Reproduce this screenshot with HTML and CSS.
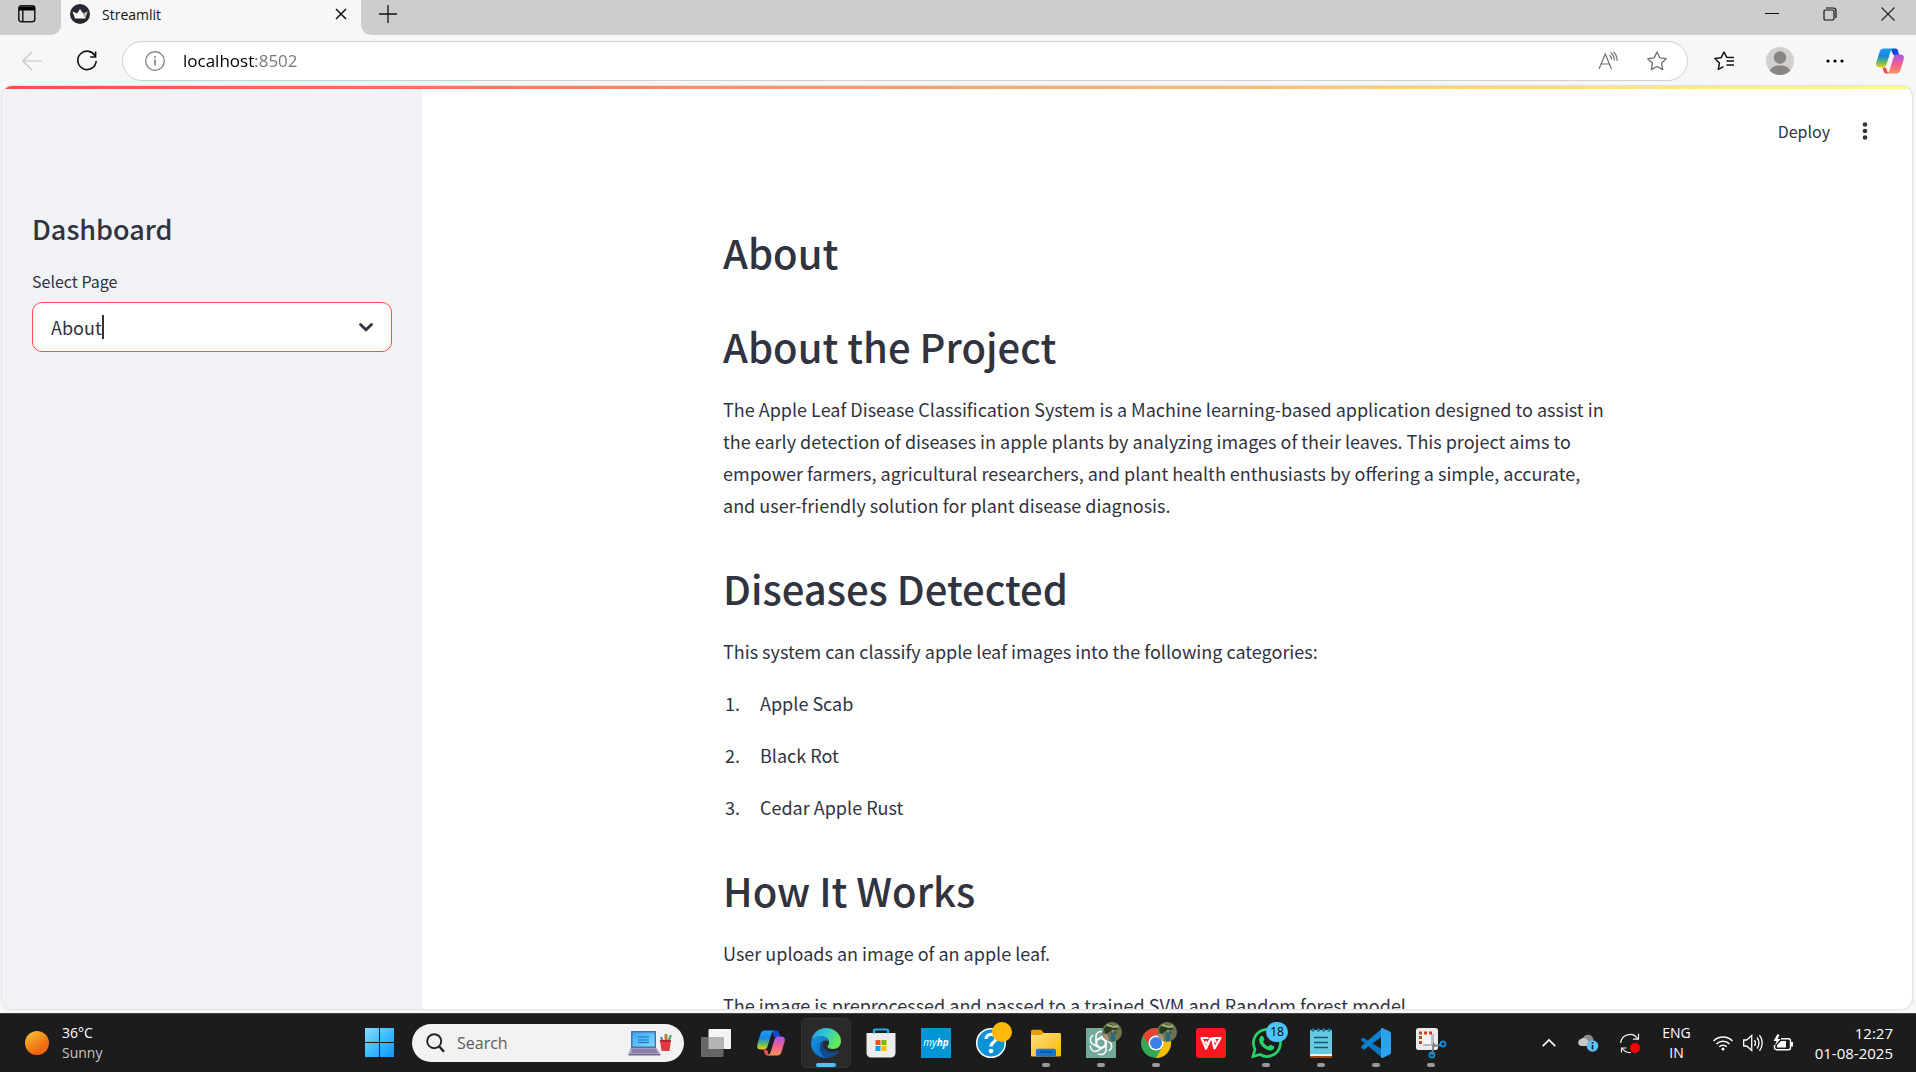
FILE: index.html
```html
<!DOCTYPE html>
<html lang="en">
<head>
<meta charset="utf-8">
<title>Streamlit</title>
<link rel="stylesheet" href="styles.css">
</head>
<body>
<svg class="sprite" aria-hidden="true">
  <defs>
    <linearGradient id="cpA" x1="0" y1="0" x2="0" y2="1"><stop offset="0" stop-color="#1b9df5"/><stop offset=".4" stop-color="#1a86e0"/><stop offset=".7" stop-color="#5dba6a"/><stop offset="1" stop-color="#f2cf13"/></linearGradient>
    <linearGradient id="cpB" x1="0" y1="0" x2="0" y2="1"><stop offset="0" stop-color="#a657f0"/><stop offset=".45" stop-color="#ea5c98"/><stop offset="1" stop-color="#ff9257"/></linearGradient>
    <symbol id="copilot" viewBox="0 0 28 28">
      <path d="M17 1.500h2.500c1.300 0 2 .8 2.400 2L23.500 9h-4c-2 0-3.500-3-4.500-7z" fill="#1746cf"/>
      <path d="M8 1.500h9.500c-2 .5-2.800 2-3.300 4L11 16c-.8 3-2 4.500-4.500 4.500H4c-3.500 0-4.500-2-3.500-5.500L3.500 5C4.300 2.500 5.800 1.500 8 1.500z" fill="url(#cpA)"/>
      <path d="M8 20.500c2 0 2.500 1 3 3 .5 1.800 1 3 3 3h-4c-1.500 0-2-1-2.500-2.500l-1-3.500z" fill="#ee4b54"/>
      <path d="M20 26.500h-9.500c2-.5 2.800-2 3.300-4L17 12c.8-3 2-4.500 4.500-4.500H24c3.500 0 4.500 2 3.500 5.500l-3 10c-.8 2.500-2.300 3.500-4.500 3.500z" fill="url(#cpB)"/>
    </symbol>
  </defs>
</svg>

<header class="tabstrip">
  <div class="strip-left">
    <button class="plain" aria-label="Tab actions">
      <svg width="20" height="20" viewBox="0 0 20 20" fill="none" stroke="#1a1a1a" stroke-width="1.500"><rect x="1.800" y="1.800" width="16" height="16" rx="2.500"/><path d="M5.800 5v13"/><path d="M2 2.500h16v4H2z" fill="#000" stroke="none"/></svg>
    </button>
  </div>
  <div class="tab">
    <svg width="20" height="20" viewBox="0 0 20 20"><circle cx="10" cy="10" r="10" fill="#262730"/><path d="M2.500 7.500L7 9.500 10 5l3.200 4.500 4.300-2-2.300 7H5z" fill="#fff"/><path d="M10 5l3.200 4.500 4.300-2-2.300 7z" fill="#b5b5b8"/></svg>
    <span class="tab-title">Streamlit</span>
    <button class="plain" aria-label="Close tab"><svg width="12" height="12" viewBox="0 0 12 12" stroke="#111" stroke-width="1.500"><path d="M1 1l10 10M11 1L1 11"/></svg></button>
  </div>
  <div class="strip-right">
    <button class="plain" aria-label="New tab"><svg width="18" height="18" viewBox="0 0 18 18" stroke="#111" stroke-width="1.300"><path d="M9 0v18M0 9h18"/></svg></button>
    <div class="window-buttons">
      <button class="plain" aria-label="Minimize"><svg width="14" height="14" viewBox="0 0 14 14" stroke="#111"><path d="M0 6.500h14"/></svg></button>
      <button class="plain" aria-label="Restore"><svg width="14" height="14" viewBox="0 0 14 14" fill="none" stroke="#111" stroke-width="1.200"><rect x="1" y="3" width="10" height="10" rx="1.200"/><path d="M3 1h7.500a2.500 2.500 0 0 1 2.500 2.500V11"/></svg></button>
      <button class="plain" aria-label="Close"><svg width="14" height="14" viewBox="0 0 14 14" stroke="#222" stroke-width="1.100"><path d="M.5.500l13 13M13.500.500l-13 13"/></svg></button>
    </div>
  </div>
</header>

<nav class="toolbar" aria-label="Browser">
  <button class="plain" aria-label="Back"><svg width="20" height="20" viewBox="0 0 20 20" fill="none" stroke="#c3c3c3" stroke-width="1.200"><path d="M20 10H.8M10 1L.8 10l9.200 9"/></svg></button>
  <button class="plain reload" aria-label="Refresh"><svg width="20" height="20" viewBox="0 0 20 20" fill="none" stroke="#111" stroke-width="1.600"><path d="M18.500 5.800A9.200 9.200 0 1 0 19.200 10"/><path d="M18.600.5v5.500h-5.500"/></svg></button>
  <div class="address">
    <svg width="20" height="20" viewBox="0 0 20 20" fill="none" stroke="#757575" stroke-width="1.200"><circle cx="10" cy="10" r="9.300"/><path d="M10 8.500v6M10 5v1.800" stroke-width="1.500"/></svg>
    <input class="url" type="text" value="localhost:8502" aria-label="Address">
    <button class="plain" aria-label="Read aloud"><svg width="20" height="20" viewBox="0 0 20 20" fill="none" stroke="#6f6f6f" stroke-width="1.200"><path d="M1 18L7.300 3l6.200 15M3.200 13h8.200M11.500 4c1.300 1 2 2.500 2 4.500M12.500 1.500c2.500 1.800 4 4.500 3.800 8M15.500.8c2.500 2.500 3.800 5.500 3.500 9.200"/></svg></button>
    <button class="plain star" aria-label="Add to favorites"><svg width="20" height="20" viewBox="0 0 20 20" fill="none" stroke="#6f6f6f" stroke-width="1.300" stroke-linejoin="round"><path d="M10 1l2.800 5.900 6.400.8-4.700 4.500 1.200 6.400L10 15.500l-5.700 3.100 1.200-6.400L.8 7.700l6.400-.8z"/></svg></button>
  </div>
  <div class="toolbar-right">
    <button class="plain" aria-label="Favorites"><svg width="20" height="20" viewBox="0 0 20 20" fill="none" stroke="#111" stroke-width="1.500" stroke-linejoin="round"><path d="M18 6.600l-5.200-.3L10 1 7.200 6.700.9 7.500l4.500 4.600-1.100 6.300 5.200-2.700M12.500 10H20M12.500 14H20M13.500 6.500H20"/></svg></button>
    <button class="plain" aria-label="Profile"><svg width="28" height="28" viewBox="0 0 28 28"><clipPath id="av"><circle cx="14" cy="14" r="14"/></clipPath><g clip-path="url(#av)"><path d="M0 0h28v28H0z" fill="#d2d0ce"/><circle cx="14" cy="10.500" r="6.200" fill="#8a8583"/><path d="M3 28c0-7 4.500-9.500 11-9.500S25 21 25 28z" fill="#8a8583"/></g></svg></button>
    <button class="plain" aria-label="Settings and more"><svg width="18" height="4" viewBox="0 0 18 4"><circle cx="2" cy="2" r="1.600"/><circle cx="9" cy="2" r="1.600"/><circle cx="16" cy="2" r="1.600"/></svg></button>
    <button class="plain" aria-label="Copilot"><svg width="28" height="28"><use href="#copilot"/></svg></button>
  </div>
</nav>

<div class="page">
  <div class="decoration"></div>
  <div class="app">
    <aside class="sidebar">
      <h2>Dashboard</h2>
      <label for="page-select">Select Page</label>
      <div class="select-box">
        <select id="page-select"><option>About</option></select>
        <span class="text-caret"></span>
        <svg width="14" height="9" viewBox="0 0 14 9" fill="none" stroke="#31333f" stroke-width="2.800"><path d="M1.500 1.500L7 6.800l5.500-5.300" stroke-linecap="round"/></svg>
      </div>
    </aside>
    <main class="main">
      <div class="app-header">
        <button class="plain deploy">Deploy</button>
        <button class="plain" aria-label="Menu"><svg width="6" height="18" viewBox="0 0 6 18" fill="#31333f"><circle cx="3" cy="2.500" r="2.300"/><circle cx="3" cy="9" r="2.300"/><circle cx="3" cy="15.500" r="2.300"/></svg></button>
      </div>
      <article class="content">
        <h1>About</h1>
        <h1>About the Project</h1>
        <p>The Apple Leaf Disease Classification System is a Machine learning-based application designed to assist in the early detection of diseases in apple plants by analyzing images of their leaves. This project aims to empower farmers, agricultural researchers, and plant health enthusiasts by offering a simple, accurate, and user-friendly solution for plant disease diagnosis.</p>
        <h1>Diseases Detected</h1>
        <p>This system can classify apple leaf images into the following categories:</p>
        <ol>
          <li>Apple Scab</li>
          <li>Black Rot</li>
          <li>Cedar Apple Rust</li>
        </ol>
        <h1>How It Works</h1>
        <p>User uploads an image of an apple leaf.</p>
        <p>The image is preprocessed and passed to a trained SVM and Random forest model.</p>
      </article>
    </main>
  </div>
</div>

<footer class="taskbar">
  <button class="plain weather">
    <svg width="24" height="24" viewBox="0 0 24 24"><defs><linearGradient id="sun" x1=".1" y1="0" x2=".8" y2="1"><stop offset="0" stop-color="#f3c433"/><stop offset=".75" stop-color="#f2690f"/></linearGradient></defs><circle cx="12" cy="12" r="12" fill="url(#sun)"/></svg>
    <span class="stack"><span>36°C</span><span class="dim">Sunny</span></span>
  </button>
  <div class="apps">
    <button class="tile" aria-label="Start"><svg width="30" height="30" viewBox="0 0 30 30"><defs><linearGradient id="win" x1="0" y1="0" x2="1" y2="1"><stop offset="0" stop-color="#87dcff"/><stop offset=".5" stop-color="#3ebcff"/><stop offset="1" stop-color="#0e96fb"/></linearGradient></defs><path d="M0 0h14v14H0zM15 0h14v14H15zM0 15h14v14H0zM15 15h14v14H15z" fill="url(#win)"/></svg></button>
    <label class="search">
      <svg width="19" height="20" viewBox="0 0 19 20" fill="none" stroke="#222" stroke-width="1.900"><circle cx="8.200" cy="8.200" r="7"/><path d="M13 13.200l5 5.500" stroke-width="2.400"/></svg>
      <input type="search" placeholder="Search" aria-label="Search">
      <svg width="44" height="26" viewBox="0 0 44 26"><defs><linearGradient id="scr" x1="0" y1="0" x2="1" y2="1"><stop offset="0" stop-color="#3ba7f0"/><stop offset="1" stop-color="#7ddcff"/></linearGradient></defs><path d="M3 1h25v17H3z" fill="#5570a8"/><path d="M4.500 2.500h22v14h-22z" fill="url(#scr)"/><path d="M10 7h11M10 10h11M10 12.500h11" stroke="#1b6cc0"/><path d="M2.500 18h26l4 6.500H.5z" fill="#a79bc0"/><path d="M4.500 20h23M4 22h25" stroke="#6e6591" stroke-width="1.200"/><path d="M.5 24h32v1.500H.5z" fill="#71668d"/><path d="M35 12l-2-5" stroke="#2b76c9" stroke-width="2"/><path d="M38 12V4" stroke="#b98035" stroke-width="3"/><path d="M40 12l3-7" stroke="#3ea45b" stroke-width="2"/><path d="M32 10h11l-1.500 11h-8z" fill="#e13b42"/><path d="M32 10h11v2H32z" fill="#b72530"/></svg>
    </label>
    <button class="tile" aria-label="Task view"><svg width="30" height="28" viewBox="0 0 30 28"><rect x="7.500" y="0" width="22.500" height="20" rx="1" fill="#f4f4f4"/><rect x="0" y="8" width="22.500" height="20" rx="1" fill="#666"/><path d="M7.500 8h15v12h-15z" fill="#b4b4b4"/></svg></button>
    <button class="tile" aria-label="Copilot"><svg width="28" height="28"><use href="#copilot"/></svg></button>
    <button class="tile active" aria-label="Microsoft Edge"><svg width="30" height="30" viewBox="0 0 30 30"><defs><linearGradient id="eg1" x1="0" y1="0" x2="1" y2=".4"><stop offset="0" stop-color="#279de0"/><stop offset=".5" stop-color="#2fc5cf"/><stop offset="1" stop-color="#66eb57"/></linearGradient><linearGradient id="eg2" x1="0" y1="0" x2="1" y2="1"><stop offset="0" stop-color="#1996e0"/><stop offset="1" stop-color="#0a62c0"/></linearGradient></defs><path d="M.5 12C1.500 5 7.500 0 15 0c9 0 15 6.500 15 13 0 5-3.500 8-8 8-3.500 0-5.500-1.300-5.500-2.300 0-.9 1.500-1.600 1.500-4.200C18 11 15 8.500 10.500 8.500 6 8.500 2 10 .5 12z" fill="url(#eg1)"/><path d="M0 15C.3 10.500 4.500 8 9.500 8c4 0 7 2 8 5-1.500-.8-5.500-1-7.500 2-2.500 4-.5 11 6 15-1 .1-3 0-4-.2C5 28.500 0 22.500 0 15z" fill="url(#eg2)"/><path d="M10 14.500c-3 5-1 13 6 15.300 5 .2 9.500-2.300 12-6.300.5-.8 0-1.200-.7-.8-5.300 2.800-14.800 1-15.300-5 0-1.300.4-2.600 1.300-3.600-1.300-.4-2.500-.3-3.300.4z" fill="#114a8b"/></svg></button>
    <button class="tile" aria-label="Microsoft Store"><svg width="30" height="30" viewBox="0 0 30 30"><path d="M8 7V2.500c0-.6.400-1 1-1h12c.6 0 1 .4 1 1V7" fill="none" stroke="#29a9ea" stroke-width="2.200"/><path d="M.5 5h29v20a4.500 4.500 0 0 1-4.500 4.500H5A4.500 4.500 0 0 1 .5 25z" fill="#ececec"/><path d="M8 5.500V2.500M22 5.500V2.500" stroke="#29a9ea" stroke-width="2.200"/><path d="M9.500 12h5v5h-5z" fill="#f25022"/><path d="M15.500 12h5v5h-5z" fill="#7fba00"/><path d="M9.500 18h5v5h-5z" fill="#00a4ef"/><path d="M15.500 18h5v5h-5z" fill="#ffb900"/></svg></button>
    <button class="tile" aria-label="myHP"><span class="hp">my<b>hp</b></span></button>
    <button class="tile" aria-label="Help"><svg width="38" height="38" viewBox="0 0 38 38"><circle cx="19" cy="19" r="14.300" fill="#0a93d6" stroke="#fff" stroke-width="1.500"/><path d="M14 15c0-6 10-6 10-.5 0 4-5 3.500-5 8" fill="none" stroke="#fff" stroke-width="3.300"/><circle cx="19" cy="27" r="2.300" fill="#fff"/><circle cx="30" cy="8" r="10" fill="#ffb90a"/></svg></button>
    <button class="tile open" aria-label="File Explorer"><svg width="30" height="28" viewBox="0 0 30 28"><defs><linearGradient id="fold" x1="0" y1="0" x2="1" y2="1"><stop offset="0" stop-color="#ffe07a"/><stop offset="1" stop-color="#f7b60f"/></linearGradient></defs><path d="M0 2.500C0 1.200.7.700 2 .7h8L13 4H27v8H0z" fill="#e3a008"/><path d="M0 6h10l3-2h15.500c1 0 1.500.5 1.500 1.500V26c0 1-.5 1.500-1.500 1.500h-27C.5 27.500 0 27 0 26z" fill="url(#fold)"/><path d="M5 27.500V22c0-1.500.7-2.300 2.300-2.300h15.400c1.600 0 2.300.8 2.300 2.300v5.500z" fill="#0f78d0"/><path d="M9 23h12" stroke="#0a4f98" stroke-width="1.500"/></svg></button>
    <button class="tile open" aria-label="ChatGPT"><svg width="42" height="38" viewBox="0 0 42 38"><path d="M6 4h30v30H6z" fill="#74aa9c"/><g fill="none" stroke="#fff" stroke-width="1.500" stroke-linejoin="round" transform="translate(21 19)"><g id="petal"><path d="M-5-4.500v-3A5 5 0 0 1 3-10.500M-5-7v9L1 5.500"/></g><use href="#petal" transform="rotate(60)"/><use href="#petal" transform="rotate(120)"/><use href="#petal" transform="rotate(180)"/><use href="#petal" transform="rotate(240)"/><use href="#petal" transform="rotate(300)"/></g><g id="photo"><circle cx="32" cy="8" r="10" fill="#6b7550"/><path d="M24 5q5-7 10-3t7 3l-7 1 3 4-6-3-6 4z" fill="#263b1c"/><path d="M27 1l7 2 4-1" stroke="#a3b47a" stroke-width="2" fill="none"/><path d="M24 10q4-2 5 6l-1 1q-4-2-5-6z" fill="#ab907d"/><path d="M31 8h4v9h-4z" fill="#256b83"/><circle cx="33" cy="7" r="1.500" fill="#b07f6d"/></g></svg></button>
    <button class="tile open" aria-label="Chrome"><svg width="42" height="38" viewBox="0 0 42 38"><circle cx="21" cy="19" r="15" fill="#34a853"/><path d="M8 11.500A15 15 0 0 1 34 11.500H21l-6.500 11.300z" fill="#ea4335"/><path d="M34 11.500A15 15 0 0 1 21 34l6.500-11.200L21 11.500z" fill="#fbbc04"/><circle cx="21" cy="19" r="7.500" fill="#fff"/><circle cx="21" cy="19" r="6" fill="#3a7fea"/><use href="#photo"/></svg></button>
    <button class="tile" aria-label="WPS Office"><svg width="30" height="30" viewBox="0 0 30 30"><rect width="30" height="30" rx="3" fill="#fb1622"/><path d="M12.500 10H5.500l4.500 10.500 4.500-10h1.500l2.500 10L24.500 10h-7l2.500 4.500M9.500 13l1.500 3" fill="none" stroke="#fff" stroke-width="2.200" stroke-linejoin="round"/></svg></button>
    <button class="tile open" aria-label="WhatsApp"><svg width="30" height="30" viewBox="0 0 30 30"><path d="M2 28.500l2-7.300A13.500 13.500 0 1 1 9 26.500z" fill="none" stroke="#25d366" stroke-width="2.700"/><path d="M9.500 8.500c1-1.200 2.300-1 2.700 0l1.200 2.800c.2.500-.1 1-1.300 2.400 1.300 2.300 3 3.800 5.300 4.800 1.300-1.600 1.700-2 2.300-1.700l3 1.400c.6.300.6.800.4 1.700-.7 2.200-3.400 3-5.500 2.400-4.800-1.500-8.500-5.200-9.400-9-.3-1.900.2-3.500 1.300-4.800z" fill="#25d366"/></svg><span class="badge">18</span></button>
    <button class="tile open" aria-label="Notepad"><svg width="24" height="30" viewBox="0 0 24 30"><path d="M1 2h22v25H1z" fill="#66c9e2"/><path d="M1 26h22v2.300H1z" fill="#f1f1f1"/><path d="M1 28h22v2H1z" fill="#9b4a12"/><path d="M5 9.500h14M5 14.500h14M5 19.500h14" stroke="#175970" stroke-width="1.700"/><g fill="#1b7799"><circle cx="4" cy="2" r="1.800"/><circle cx="9.300" cy="2" r="1.800"/><circle cx="14.700" cy="2" r="1.800"/><circle cx="20" cy="2" r="1.800"/></g></svg></button>
    <button class="tile open" aria-label="Visual Studio Code"><svg width="30" height="30" viewBox="0 0 30 30"><path d="M2 9.500l-1.700 1.600c-.5.500-.5 1 0 1.500L21.500 30l1.500-7.500z" fill="#0a76c0"/><path d="M21.500 0L.4 18.200c-.5.500-.5 1 0 1.500L2 21.200c.5.400 1 .4 1.500 0L23 7z" fill="#0f80cc"/><path d="M21.500 0l7.300 3.500c.8.400 1.200 1 1.200 1.900v19.200c0 .9-.4 1.500-1.200 1.900L21.500 30c-1 .2-1.500-.3-1.500-1V1c0-.7.500-1.200 1.500-1z" fill="#2ba3ee"/></svg></button>
    <button class="tile open" aria-label="Snipping Tool"><svg width="30" height="30" viewBox="0 0 30 30"><rect width="22" height="22" rx="2.500" fill="#e9ebee"/><path d="M7 6h11v12H7z" fill="#b9bcc2"/><path d="M6 5h9v11H6z" fill="#f4f5f7"/><path d="M3 5h3M8 5h3M13 5h3M4.500 8v3M4.500 13v3" stroke="#d13f18" stroke-width="3"/><path d="M16 27l2-12M16 18l10-1" stroke="#777b82" stroke-width="1.800"/><circle cx="27" cy="16" r="2.500" fill="none" stroke="#168bd2" stroke-width="1.800"/><circle cx="16" cy="27" r="2.500" fill="none" stroke="#168bd2" stroke-width="1.800"/></svg></button>
  </div>
  <div class="tray">
    <button class="plain" aria-label="Show hidden icons"><svg width="14" height="8" viewBox="0 0 14 8" fill="none" stroke="#fff" stroke-width="1.700"><path d="M.7 7.200L7 1l6.300 6.200"/></svg></button>
    <button class="plain" aria-label="OneDrive"><svg width="20" height="18" viewBox="0 0 20 18"><path d="M5 4c1-3 4.500-4 7-3 2 .7 3 2.500 3.500 4.500L12 12 5 6z" fill="#8b8b8b"/><path d="M4 4.500C6 3.500 9 4.500 10 7l4 5H4C-1 12-1 5.500 4 4.500z" fill="#c9c9c9"/><circle cx="14.500" cy="12" r="5.800" fill="#5cc2f7"/><path d="M14.500 11v4.500M14.500 8v1.800" stroke="#123" stroke-width="1.600"/></svg></button>
    <button class="plain" aria-label="Windows Update"><svg width="20" height="20" viewBox="0 0 20 20" fill="none" stroke="#eee" stroke-width="1.200"><path d="M.6 10A9.300 9.300 0 0 1 17.500 5.500M18.500.8v5.300h-5.500M11 19.500A9.500 9.500 0 0 1 2 15M1.500 19.500V15h5"/><circle cx="15" cy="15" r="5" fill="#f00" stroke="none"/></svg></button>
    <button class="plain stack lang"><span>ENG</span><span>IN</span></button>
    <button class="plain status" aria-label="Network, volume and battery">
      <svg width="20" height="16" viewBox="0 0 20 16" fill="none" stroke="#fff" stroke-width="1.500"><path d="M.6 6a13.300 13.300 0 0 1 18.800 0M3.500 9a9.200 9.200 0 0 1 13 0M6.300 11.800a5.200 5.200 0 0 1 7.400 0"/><circle cx="10" cy="14" r="1.500" fill="#fff" stroke="none"/></svg>
      <svg width="20" height="18" viewBox="0 0 20 18" fill="none" stroke="#fff" stroke-width="1.300"><path d="M.7 6v6h3l5 4.500v-15L3.700 6zM11.500 6c1.200 1.800 1.200 4.200 0 6M14 3.500c2.500 3.500 2.500 7.500 0 11M16.500 1.200c3.500 5 3.500 10.600 0 15.600"/></svg>
      <svg width="20" height="18" viewBox="0 0 20 18"><path d="M8 4.700h7.500a2 2 0 0 1 2 2v7a2 2 0 0 1-2 2h-12a2 2 0 0 1-2-2V11" fill="none" stroke="#fff" stroke-width="1.400"/><path d="M8 7h5v6.500H4V11zM18 8h2v4.500h-2zM4.500 0L.5 7h3L2 11.500 7.500 5h-3L6.500 1z" fill="#fff"/></svg>
    </button>
    <button class="plain stack clock"><span>12:27</span><span>01-08-2025</span></button>
  </div>
</footer>
</body>
</html>
```
FILE: styles.css
```css
* { box-sizing: border-box; }

body {
  margin: 0;
  height: 100vh;
  display: flex;
  flex-direction: column;
  overflow: hidden;
  background: #f7f7f7;
  font-family: "Open Sans", "Noto Sans", sans-serif;
  color: #111;
}

.sprite { position: absolute; width: 0; height: 0; }
svg { display: block; flex: none; overflow: visible; }

.plain {
  display: flex;
  align-items: center;
  padding: 0;
  border: 0;
  background: none;
  color: inherit;
  font: inherit;
}

/* Browser tab strip */
.tabstrip { display: flex; flex: none; height: 35px; }

.strip-left,
.strip-right {
  display: flex;
  align-items: center;
  background: #cdcdcd;
  padding-bottom: 7px;
}

.strip-left { width: 61px; padding-left: 17px; border-bottom-right-radius: 10px; }

.strip-right {
  flex: 1;
  justify-content: space-between;
  padding-left: 18px;
  padding-right: 21px;
  border-bottom-left-radius: 10px;
}

.tab {
  display: flex;
  align-items: center;
  width: 300px;
  padding: 0 14px 7px 9px;
  font-size: 14px;
}

.tab-title { flex: 1; margin-left: 12px; }
.window-buttons { display: flex; gap: 44px; }

/* Address bar */
.toolbar {
  display: flex;
  flex: none;
  align-items: center;
  height: 51px;
  padding: 0 12px 0 22px;
}

.reload { margin: 0 25px 0 35px; }

.address {
  display: flex;
  flex: 1;
  align-items: center;
  height: 40px;
  padding: 0 20px 0 22px;
  border: 1px solid #cfcfcf;
  border-radius: 20px;
  background: #fff;
}

.url {
  flex: 1;
  margin-left: 18px;
  padding: 0;
  border: 0;
  outline: 0;
  font-family: inherit;
  font-size: 17px;
  color: transparent;
  background: linear-gradient(to right, #000 73px, #757575 73px);
  background-clip: text;
}

.star { margin-left: 29px; }

.toolbar-right {
  display: flex;
  align-items: center;
  gap: 32px;
  margin-left: 26px;
}

/* Web page */
.page {
  display: flex;
  flex: 1;
  flex-direction: column;
  min-height: 0;
  margin: 0 4px 4px 2px;
  overflow: hidden;
  border-radius: 10px;
  background: #fff;
  box-shadow: 0 0 2px #aaa;
  color: #31333f;
  font-family: "Noto Sans CJK SC", sans-serif;
  font-size: 18px;
  line-height: 32px;
}

.decoration {
  flex: none;
  height: 3px;
  background: linear-gradient(to right, #ff4b4b, #fffd80);
}

.app { display: flex; flex: 1; min-height: 0; }

.sidebar {
  width: 420px;
  flex: none;
  padding: 120px 30px 0;
  background: #f0f2f6;
}

.sidebar h2 {
  margin: 0 0 20px;
  font-size: 27px;
  font-weight: 500;
  line-height: 40px;
}

.sidebar label {
  display: block;
  margin-bottom: 9px;
  font-size: 16px;
  line-height: 24px;
}

.select-box {
  display: flex;
  align-items: center;
  height: 50px;
  padding: 0 18px;
  border: 1px solid #ff4b4b;
  border-radius: 10px;
  background: #fff;
}

.select-box select {
  appearance: none;
  field-sizing: content;
  padding: 0;
  border: 0;
  outline: 0;
  background: none;
  color: inherit;
  font: inherit;
}

.text-caret { width: 2px; height: 24px; margin-right: auto; background: #31333f; }

.main { flex: 1; min-width: 0; overflow: hidden; }

.app-header {
  display: flex;
  justify-content: flex-end;
  gap: 32px;
  height: 83px;
  padding-right: 44px;
}

.deploy { font-size: 16px; }

.content {
  max-width: 888px;
  margin: 0 auto;
  padding-top: 53px;
}

.content h1 {
  margin: 40px 0 20px;
  font-size: 40px;
  font-weight: 500;
  line-height: 54px;
}

.content h1:first-child { margin-top: 0; }
.content p { margin: 0 0 20px; }
.content ol { margin: 0; padding-left: 21px; }
.content li { margin-bottom: 20px; padding-left: 16px; }

/* Windows taskbar */
.taskbar {
  display: flex;
  flex: none;
  height: 59px;
  border-top: 1px solid #444;
  background: #1c1c1c;
  color: #fff;
  font-size: 14px;
  line-height: 20px;
}

.weather { width: 355px; padding-left: 25px; gap: 13px; text-align: left; }
.stack { display: flex; flex-direction: column; justify-content: center; }
.dim { color: #c4c4c4; }
.apps { display: flex; align-items: center; gap: 5px; }

.tile {
  position: relative;
  display: flex;
  align-items: center;
  justify-content: center;
  width: 50px;
  height: 50px;
  padding: 0;
  border: 1px solid transparent;
  border-radius: 5px;
  background: none;
  color: inherit;
  font: inherit;
}

.active { border-color: #343434; background: #2a2a2a; }

.active::after,
.open::after {
  content: "";
  position: absolute;
  bottom: 0;
  left: calc(50% - 4px);
  width: 8px;
  height: 4px;
  border-radius: 2px;
  background: #9a9a9a;
}

.active::after { left: calc(50% - 10px); width: 20px; background: #4cc2ff; }

.hp {
  width: 30px;
  height: 30px;
  background: #0096d6;
  font-size: 10px;
  font-style: italic;
  line-height: 29px;
}

.badge {
  position: absolute;
  top: 3px;
  right: 2px;
  width: 22px;
  height: 20px;
  border-radius: 10px;
  background: #4cc2ff;
  color: #000;
  font-size: 12px;
  line-height: 20px;
}

.search {
  display: flex;
  align-items: center;
  width: 272px;
  height: 38px;
  margin: 0 2px;
  padding: 0 12px 0 14px;
  border-radius: 19px;
  background: #f2f2f2;
}

.search input {
  flex: 1;
  min-width: 0;
  margin-left: 12px;
  padding: 0;
  border: 0;
  outline: 0;
  background: none;
  font-family: inherit;
  font-size: 16px;
}

.search input::placeholder { color: #5c5c5c; }

.tray {
  display: flex;
  align-items: center;
  gap: 22px;
  margin-left: auto;
  padding-right: 23px;
}

.tray > * { height: 58px; }
.lang { text-align: center; }
.status { gap: 10px; }
.clock { align-items: flex-end; font-size: 15px; }
.lang span, .clock span { display: block; }
```
